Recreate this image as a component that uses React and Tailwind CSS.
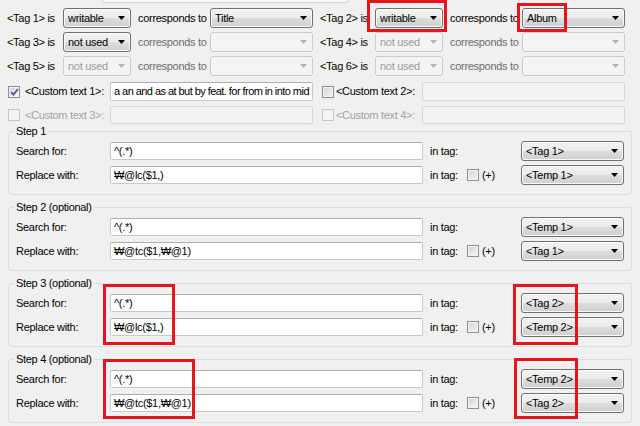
import React from 'react';

const Arrow = ({ disabled }) => (
  <svg width="7" height="4" viewBox="0 0 7 4" className="ml-auto mr-[5px] shrink-0">
    <polygon points="0,0 7,0 3.5,4" fill={disabled ? '#b4b4b4' : '#000'} />
  </svg>
);

const Combo = ({ value, w, disabled }) => (
  <div
    className={
      'flex items-center h-[20px] rounded-[3px] border shrink-0 ' +
      w +
      (disabled
        ? ' border-[#c9cbcd] bg-[#f4f4f4] text-[#9a9a9a]'
        : ' border-[#707070] bg-[linear-gradient(#f2f2f2,#ebebeb_50%,#dddddd_50%,#cfcfcf)] shadow-[inset_0_0_0_1px_#fbfbfb] text-black')
    }
  >
    <span className="pl-[4px] whitespace-nowrap">{value}</span>
    <Arrow disabled={disabled} />
  </div>
);

const Field = ({ value, w, h = 'h-[18px]', disabled, tight }) => (
  <div
    className={
      'flex items-center rounded-[2px] border shrink-0 overflow-hidden ' +
      w +
      ' ' +
      h +
      (disabled ? ' border-[#d3d5d9] bg-[#f3f3f3]' : ' border-[#c6c9d0] border-t-[#acaeb4] bg-white')
    }
  >
    <span className={'pl-[3px] whitespace-nowrap ' + (tight ? 'tracking-[-0.55px]' : '')}>{value}</span>
  </div>
);

const Check = ({ checked, disabled }) => (
  <div
    className={
      'w-[12px] h-[12px] border shrink-0 flex items-center justify-center ' +
      (disabled
        ? 'border-[#c5c5c5] bg-[#f4f4f4]'
        : 'border-[#8e8f8f] bg-[linear-gradient(135deg,#d2d2d2,#f6f6f6)] shadow-[inset_0_0_0_1px_#f4f4f4]')
    }
  >
    {checked && (
      <svg width="9" height="8" viewBox="0 0 9 8">
        <path d="M1 4.2 L3.4 6.6 L8 1" fill="none" stroke="#4a5e9e" strokeWidth="1.8" />
      </svg>
    )}
  </div>
);

const TagRow = ({ left, right }) => (
  <div className="flex items-center h-[20px] pl-[7px]">
    <span className="w-[56px] shrink-0">{left.label}</span>
    <Combo value={left.is} w="w-[68px]" disabled={left.isOff} />
    <span className={'ml-[7px] w-[72px] shrink-0 ' + (left.mapOff ? 'text-[#6d6d6d]' : '')}>corresponds to</span>
    <Combo value={left.map} w="w-[103px]" disabled={left.mapOff} />
    <span className="ml-[7px] w-[55px] shrink-0">{right.label}</span>
    <Combo value={right.is} w="w-[68px]" disabled={right.isOff} />
    <span className={'ml-[7px] w-[72px] shrink-0 ' + (right.mapOff ? 'text-[#6d6d6d]' : '')}>corresponds to</span>
    <Combo value={right.map} w="w-[103px]" disabled={right.mapOff} />
  </div>
);

const CustomRow = ({ a, b, className, h }) => (
  <div className={'flex items-center pl-[8px] ' + className}>
    <Check checked={a.checked} disabled={a.off} />
    <span className={'ml-[5px] w-[85px] shrink-0 ' + (a.off ? 'text-[#a3a3a3]' : '')}>{a.label}</span>
    <Field value={a.value} w="w-[203px]" h={h} disabled={!a.checked} tight />
    <div className="ml-[9px]">
      <Check disabled={b.off} />
    </div>
    <span className={'ml-[2px] w-[86px] shrink-0 ' + (b.off ? 'text-[#a3a3a3]' : '')}>{b.label}</span>
    <Field w="w-[203px]" h={h} disabled />
  </div>
);

const Step = ({ title, search, replace, tagA, tagB, first }) => (
  <fieldset
    className={'mx-[8px] w-[624px] border border-[#d5dfe5] rounded-[3px] pt-[4px] pb-[9px] ' + (first ? '' : 'mt-[6px]')}
  >
    <legend className="ml-[5px] px-[2px] leading-[12px]">{title}</legend>
    <div className="flex items-center h-[20px] pl-[7px]">
      <span className="w-[94px] shrink-0">Search for:</span>
      <Field value={search} w="w-[313px]" />
      <div className="ml-[7px] w-[91px] shrink-0">in tag:</div>
      <Combo value={tagA} w="w-[103px]" />
    </div>
    <div className="flex items-center h-[20px] pl-[7px] mt-[4px]">
      <span className="w-[94px] shrink-0">Replace with:</span>
      <Field value={replace} w="w-[313px]" />
      <div className="ml-[7px] w-[91px] shrink-0 flex items-center">
        <span className="w-[37px] shrink-0">in tag:</span>
        <Check />
        <span className="ml-[3px]">(+)</span>
      </div>
      <Combo value={tagB} w="w-[103px]" />
    </div>
  </fieldset>
);

const marks = [
  'left-[367px] top-[0px] w-[80px] h-[32px]',
  'left-[517px] top-[3px] w-[50px] h-[29px]',
  'left-[103px] top-[284px] w-[72px] h-[61px]',
  'left-[513px] top-[284px] w-[65px] h-[61px]',
  'left-[103px] top-[359px] w-[92px] h-[60px]',
  'left-[514px] top-[358px] w-[64px] h-[61px]',
];

export default function App() {
  return (
    <div className="relative w-[640px] h-[426px] overflow-hidden bg-[#f0f0f0] text-[11px] tracking-[-0.3px] text-black font-['Liberation_Sans',Arial,sans-serif]">
      <div className="ml-[102px] w-[246px] h-[3px] border-x border-b border-[#d3d5d9] rounded-b-[2px] bg-[#f7f7f7]" />
      <div className="mt-[5px] flex flex-col gap-[4px]">
        <TagRow
          left={{ label: '<Tag 1> is', is: 'writable', map: 'Title' }}
          right={{ label: '<Tag 2> is', is: 'writable', map: 'Album' }}
        />
        <TagRow
          left={{ label: '<Tag 3> is', is: 'not used', map: '', mapOff: true }}
          right={{ label: '<Tag 4> is', is: 'not used', isOff: true, map: '', mapOff: true }}
        />
        <TagRow
          left={{ label: '<Tag 5> is', is: 'not used', isOff: true, map: '', mapOff: true }}
          right={{ label: '<Tag 6> is', is: 'not used', isOff: true, map: '', mapOff: true }}
        />
      </div>
      <CustomRow
        className="mt-[6px]"
        h="h-[19px]"
        a={{ checked: true, label: '<Custom text 1>:', value: 'a an and as at but by feat. for from in into mid r' }}
        b={{ label: '<Custom text 2>:' }}
      />
      <CustomRow
        className="mt-[5px]"
        h="h-[18px]"
        a={{ off: true, label: '<Custom text 3>:' }}
        b={{ off: true, label: '<Custom text 4>:' }}
      />
      <div className="mt-[1px]">
        <Step first title="Step 1" search="^(.*)" replace="₩@lc($1,)" tagA="<Tag 1>" tagB="<Temp 1>" />
        <Step title="Step 2 (optional)" search="^(.*)" replace="₩@tc($1,₩@1)" tagA="<Temp 1>" tagB="<Tag 1>" />
        <Step title="Step 3 (optional)" search="^(.*)" replace="₩@lc($1,)" tagA="<Tag 2>" tagB="<Temp 2>" />
        <Step title="Step 4 (optional)" search="^(.*)" replace="₩@tc($1,₩@1)" tagA="<Temp 2>" tagB="<Tag 2>" />
      </div>
      {marks.map((m) => (
        <div key={m} className={'absolute border-[3px] border-[#e8141c] ' + m} />
      ))}
    </div>
  );
}
